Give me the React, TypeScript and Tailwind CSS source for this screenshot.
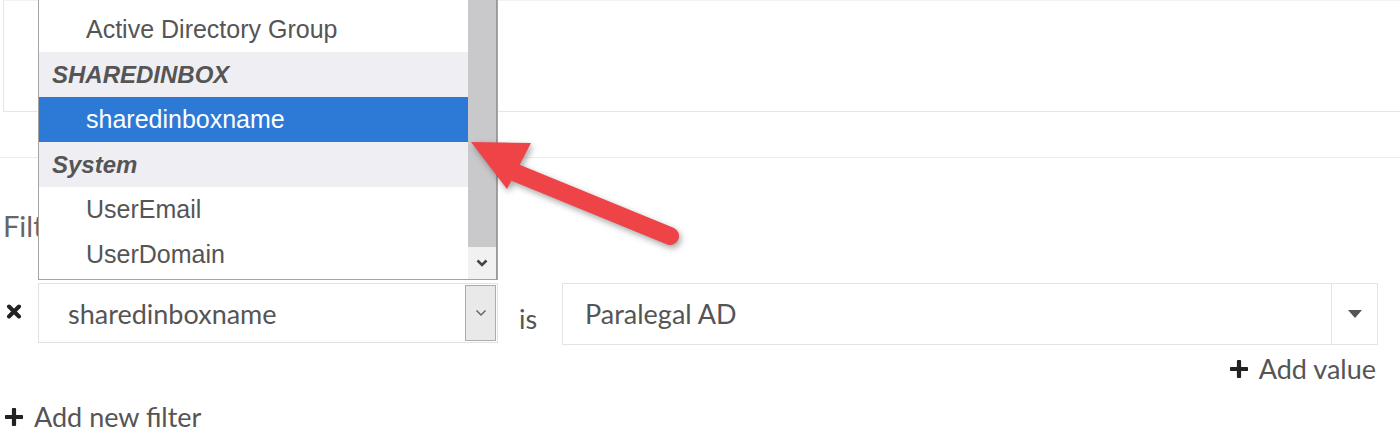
import React from "react";

type Option = { label: string; group?: boolean; selected?: boolean };

const options: Option[] = [
	{ label: "Active Directory Group" },
	{ label: "SHAREDINBOX", group: true },
	{ label: "sharedinboxname", selected: true },
	{ label: "System", group: true },
	{ label: "UserEmail" },
	{ label: "UserDomain" },
];

const Plus = () => (
	<svg width="18" height="18" viewBox="0 0 18 18" className="shrink-0">
		<path d="M9 1.5v15M1.5 9h15" stroke="#222" strokeWidth="4.2" strokeLinecap="round" />
	</svg>
);

const Cross = () => (
	<svg width="16" height="15" viewBox="0 0 16 15">
		<path d="M3 2.5l10 10M13 2.5l-10 10" stroke="#222" strokeWidth="4" strokeLinecap="round" />
	</svg>
);

const Chevron = ({ color = "#666", width = 1.5 }: { color?: string; width?: number }) => (
	<svg width="12" height="8" viewBox="0 0 12 8">
		<path d="M1.5 1.5l4.5 4.5 4.5-4.5" fill="none" stroke={color} strokeWidth={width} />
	</svg>
);

// open option list of the field select, rendered over the page
const OptionList = () => (
	<div className="absolute left-[38px] top-[-1px] w-[460px] h-[281px] border border-[#a3a3a3] bg-white flex font-['Liberation_Sans',Arial,sans-serif]">
		<ul className="flex-1 pt-[7px]">
			{options.map((o) =>
				o.group ? (
					<li
						key={o.label}
						className="h-[45px] flex items-center pl-[13px] bg-[#efeff3] text-[24px] font-bold italic text-[#555]">
						{o.label}
					</li>
				) : (
					<li
						key={o.label}
						className={`h-[45px] flex items-center pl-[47px] text-[25px] ${
							o.selected ? "bg-[#2d79d6] text-white" : "text-[#555]"
						}`}>
						{o.label}
					</li>
				)
			)}
		</ul>
		<div className="w-[29px] flex flex-col border-r border-[#9a9a9a] bg-[#f1f1f1]">
			<div className="h-[247px] bg-[#c9c9cb]" />
			<div className="flex-1 flex items-center justify-center">
				<Chevron color="#444" width={2.5} />
			</div>
		</div>
	</div>
);

const Arrow = () => (
	<svg
		className="absolute left-[460px] top-[130px]"
		width="240"
		height="130"
		viewBox="0 0 240 130"
		style={{ filter: "drop-shadow(2px 3px 3px rgba(0,0,0,0.35))" }}>
		<line x1="44" y1="38" x2="210" y2="106" stroke="#ee4347" strokeWidth="18" strokeLinecap="round" />
		<polygon points="11,12 71,13 47,59" fill="#ee4347" />
	</svg>
);

export default function App() {
	return (
		<div className="relative w-[1400px] h-[448px] overflow-hidden bg-white font-['Lato','Roboto',sans-serif] text-[#555]">
			<div className="h-[158px] border-b border-[#ececec] pl-[3px]">
				<div className="h-[112px] border border-r-0 border-t-[#f2f2f2] border-[#e6e6e6]" />
			</div>

			<div className="pl-[3px]">
				<h2 className="mt-[48px] h-[40px] text-[29px] leading-[40px] font-normal text-[#666]">Filters</h2>

				<div className="mt-[37px] flex items-start">
					<div className="w-[35px] pt-[21px] pl-[3px]">
						<Cross />
					</div>
					<div className="w-[460px] h-[60px] flex border border-[#e2e2e2] bg-white">
						<div className="flex-1 flex items-center pl-[29px] pt-[2px] text-[27px] text-[#555]">sharedinboxname</div>
						<div className="w-[31px] my-[1px] mr-[1px] flex items-center justify-center bg-[#e9e9e9] border border-[#ababab]">
							<Chevron />
						</div>
					</div>
					<span className="w-[64px] pt-[16px] pl-[21px] text-[27px] text-[#555]">is</span>
					<div className="w-[816px] h-[62px] flex border border-[#e4e4e4]">
						<div className="flex-1 flex items-center pl-[22px] text-[27px] text-[#555]">Paralegal AD</div>
						<div className="w-[46px] flex items-center justify-center border-l border-[#e4e4e4]">
							<svg width="14" height="8" viewBox="0 0 14 8">
								<path d="M0 0h14L7 8z" fill="#555" />
							</svg>
						</div>
					</div>
				</div>

				<div className="w-[1373px] mt-[8px] flex justify-end">
					<button className="flex items-center gap-[11px] text-[27px] leading-[32px] text-[#555]">
						<Plus />
						Add value
					</button>
				</div>

				<button className="mt-[16px] flex items-center gap-[11px] pl-[2px] text-[27px] leading-[32px] text-[#555]">
					<Plus />
					Add new filter
				</button>
			</div>

			<OptionList />
			<Arrow />
		</div>
	);
}
